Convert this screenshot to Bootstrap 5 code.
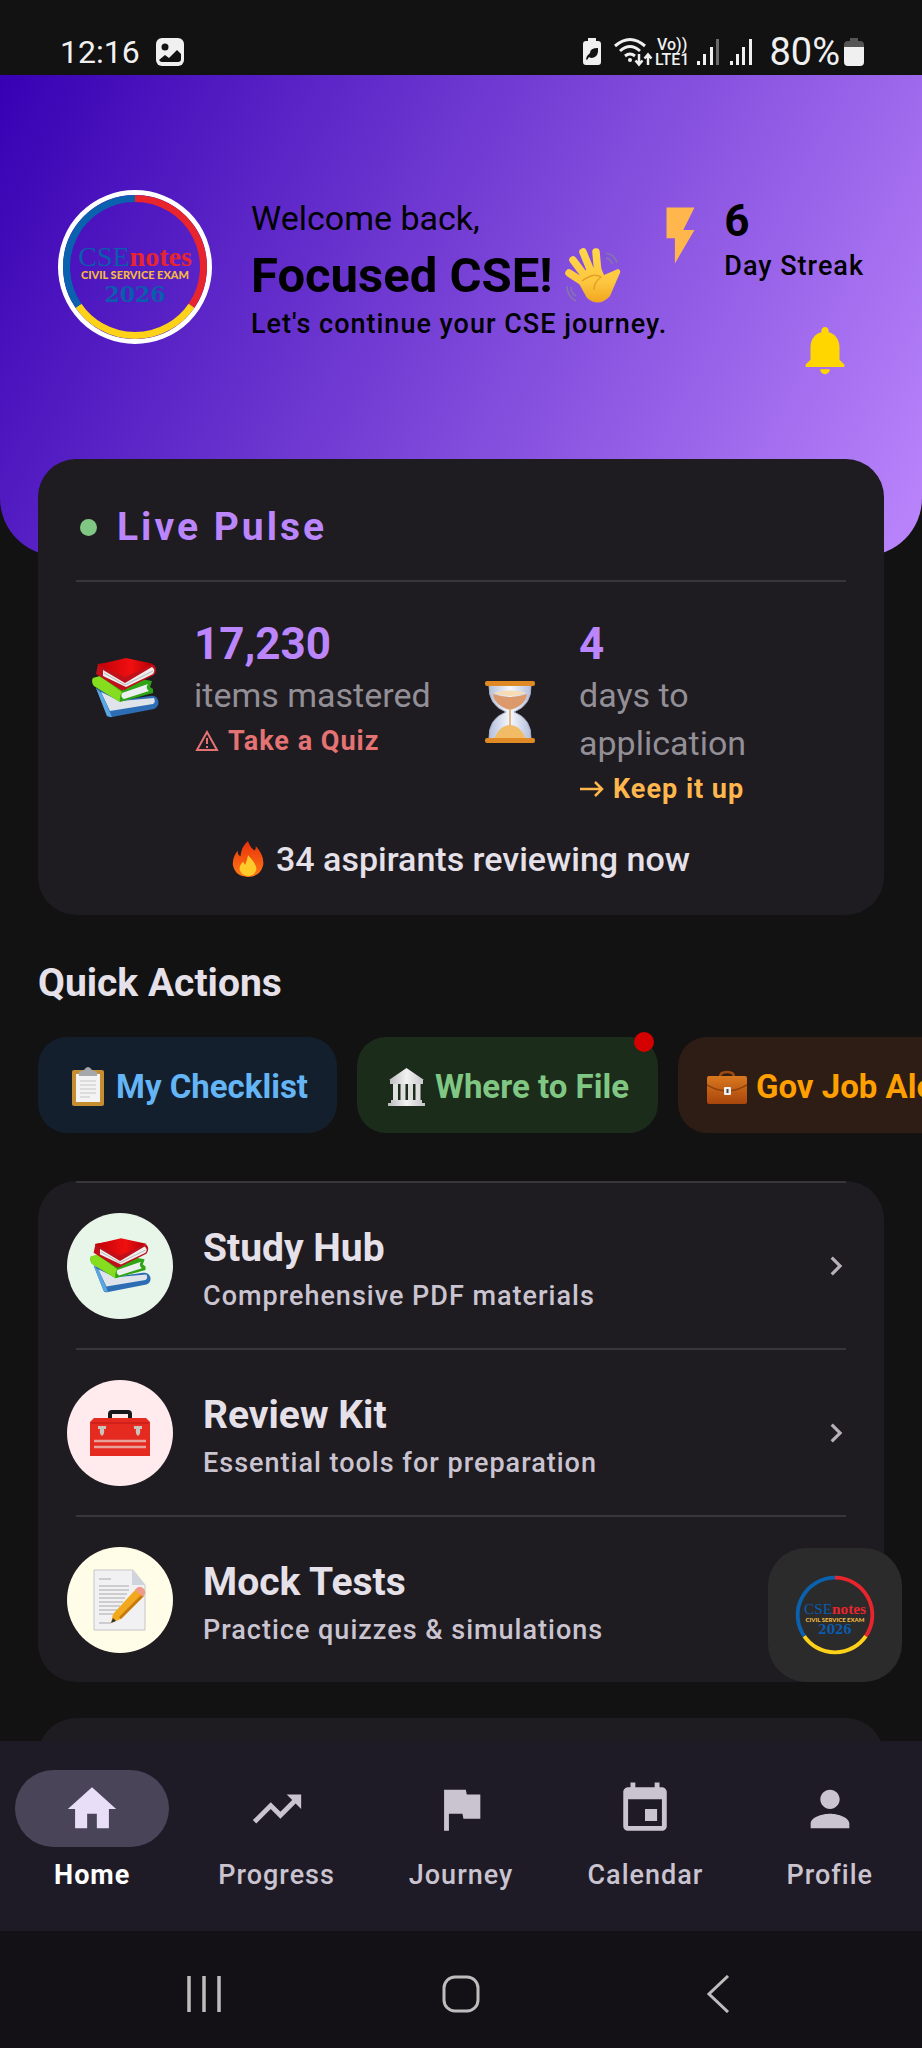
<!DOCTYPE html>
<html lang="en" data-bs-theme="dark">
<head>
<meta charset="utf-8">
<meta name="viewport" content="width=device-width, initial-scale=1">
<title>CSEnotes</title>
<link href="https://cdn.jsdelivr.net/npm/bootstrap@5.3.0/dist/css/bootstrap.min.css" rel="stylesheet">
<style>
  body { font-family: Roboto, "Liberation Sans", sans-serif; background: #121212; color: #e6e1e9; }
  h1, h2 { color: inherit; }
  a { text-decoration: none; color: inherit; }
  svg { display: block; flex: none; }
  .fw-mid { font-weight: 500; }
  .purple { color: #bb86fc; }
  .muted { color: #938f96; }
  .alert-red { color: #e57373; }
  .amber { color: #ffb74d; }

  /* type scale */
  .t-small { font-size: 27px; line-height: 36px; letter-spacing: 1px; }
  .t-chip { font-size: 33px; line-height: 48px; }
  .t-body { font-size: 34px; line-height: 48px; }
  .t-head { font-size: 39px; line-height: 52px; }
  .t-num { font-size: 44px; line-height: 54px; }
  .t-hero { font-size: 49px; line-height: 60px; }
  .tracked-wide { letter-spacing: 3px; }

  .status-bar { height: 75px; padding: 28px 58px 0 60px; color: #f0f0f0; }
  .clock { font-size: 32px; line-height: 40px; }
  .charge { font-size: 38px; line-height: 40px; }
  .volte { font-size: 16px; line-height: 15px; }

  .hero { background: linear-gradient(118deg, #3700b3, #bb86fc); border-radius: 0 0 58px 58px; color: #000; padding: 115px 58px 177px; }
  .hero-name { gap: 39px; min-width: 0; }
  .hero-text { padding-top: 4px; }
  .hero-text h1 { gap: 12px; }
  .streak { gap: 10px; }
  .bolt { margin-top: 12px; }
  .bell-btn { margin: 37px 10px 0 0; }

  .panel { background: #1e1b21; border: 0; border-radius: 38px; margin: 0 38px; }
  .pulse { margin-top: -97px; padding: 42px 38px 32px; }
  .pulse-dot { width: 17px; height: 17px; background: #81c784; margin-left: 4px; }
  .rule { height: 2px; background: #39363b; border: 0; opacity: 1; margin: 0; }
  .pulse .rule { margin: 27px 0 35px; }
  .stat { gap: 35px; padding-left: 16px; }
  .reviewing { margin-top: 28px; gap: 12px; }

  .quick-title { margin: 42px 38px 0; }
  .chips { gap: 20px; padding: 28px 38px 12px; overflow: hidden; }
  .chip { height: 96px; border-radius: 29px; padding: 4px 29px 0; border: 0; gap: 9px; white-space: nowrap; flex: none; }
  .chip:hover { filter: brightness(1.2); }
  .chip-blue { background: #141f2d; color: #64b5f6; }
  .chip-green { background: #1b2c1b; color: #81c784; }
  .chip-orange { background: #2d1d14; color: #ffa000; }
  .dot-badge { width: 20px; height: 20px; background: #d50000; top: -5px; right: 4px; }

  .hub { margin-top: 36px; overflow: hidden; }
  .hub .rule { margin: 0 38px; }
  .hub-row { height: 165px; padding: 0 29px; gap: 30px; }
  .hub-row small { color: #cac4d0; display: block; }
  .disc { width: 106px; height: 106px; flex: none; }
  .disc-green { background: #e8f5e9; }
  .disc-pink { background: #ffebee; }
  .disc-cream { background: #fffde7; }
  .next { margin-top: 36px; height: 120px; }

  .fab { right: 20px; bottom: 59px; width: 134px; height: 134px; border-radius: 38px; background: #2b2b2b; border: 0; }

  .tabs { background: #1f1b26; padding: 29px 0 38px; }
  .tabs a { flex: 1 1 0; color: #cac4d0; gap: 10px; }
  .tabs a.active { color: #fff; }
  .pill { width: 154px; height: 77px; }
  .active .pill { background: #4a4458; color: #e8def8; }
  .sys { background: #131115; height: 117px; padding: 8px 75px 0; }
  .sys button { flex: 1 1 0; background: none; border: 0; color: #bdbdbd; }
</style>
</head>
<body class="vh-100 d-flex flex-column overflow-hidden">

<svg width="0" height="0" class="position-absolute" aria-hidden="true">
  <defs>
    <linearGradient id="gRed" x1="0" x2="1"><stop offset="0" stop-color="#c00008"/><stop offset=".6" stop-color="#f01010"/><stop offset="1" stop-color="#b00008"/></linearGradient>
    <linearGradient id="gHand" gradientUnits="userSpaceOnUse" x1="0" y1="0" x2="0" y2="56"><stop offset="0" stop-color="#ffd84a"/><stop offset=".6" stop-color="#fdc740"/><stop offset="1" stop-color="#f0a41c"/></linearGradient>
    <linearGradient id="gCase" x1="0" y1="0" x2="0" y2="1"><stop offset="0" stop-color="#d9781f"/><stop offset="1" stop-color="#a8450c"/></linearGradient>
    <linearGradient id="gStone" x1="0" x2="1"><stop offset="0" stop-color="#b9b9bd"/><stop offset=".5" stop-color="#f2f2f2"/><stop offset="1" stop-color="#c3c3c8"/></linearGradient>
    <linearGradient id="gFire" x1="0" y1="0" x2="0" y2="1"><stop offset="0" stop-color="#e8300c"/><stop offset="1" stop-color="#ff7a14"/></linearGradient>
    <linearGradient id="gGlass" x1="0" x2="1"><stop offset="0" stop-color="#b4bfdc"/><stop offset=".5" stop-color="#f6f8fd"/><stop offset="1" stop-color="#b4bfdc"/></linearGradient>
    <symbol id="books" viewBox="0 0 67 60">
      <path d="M4 30 15 58Q17 60 20 59L62 51Q68 48 66 42Q64 37 58 38L30 42Z" fill="#2c6db4"/>
      <path d="M9 34 18 53 61 46Q64 44 62 40L28 43Z" fill="#dfe4ea"/>
      <path d="M4 30 15 58 20 59 10 36Z" fill="#5aa6e0"/>
      <path d="M1 20Q-1 24 2 28L28 44 61 35V31L58 29 60 23 20 16Z" fill="#2fa516"/>
      <path d="M30 35 56 26Q53 30 57 33L32 41Q28 39 30 35Z" fill="#eceff0"/>
      <path d="M1 20Q-1 24 2 28L28 44Q27 38 30 34L8 18Z" fill="#86dc1e"/>
      <path d="M6 6 4 16 29 32Q32 33 36 30L62 17Q66 12 62 7L34 2Z" fill="#c0101a"/>
      <path d="M11 12 33 25 60 9Q64 12 61 16L34 29 11 18Z" fill="#eee"/>
      <path d="M5 7 34 0 62 6 33 19Z" fill="url(#gRed)"/>
      <path d="M12 15 33 27 61 13" fill="none" stroke="#b5b5b5"/>
    </symbol>
    <symbol id="logo" viewBox="0 0 154 154">
      <g fill="none" stroke-width="7">
        <path d="M77 8.500A68.500 68.500 0 0 1 133.500 115.700" stroke="#e8252d"/>
        <path d="M133.500 115.700A68.500 68.500 0 0 1 20.500 115.700" stroke="#ffd21a"/>
        <path d="M20.500 115.700A68.500 68.500 0 0 1 77 8.500" stroke="#0a62ae"/>
      </g>
      <g text-anchor="middle">
        <text x="77" y="76" font-family="Liberation Serif, serif" font-size="28" fill="#0a5cae">CSE<tspan fill="#e8252d" font-weight="700">notes</tspan></text>
        <text x="77" y="89" font-family="Lato, sans-serif" font-size="11" font-weight="900" fill="#f4b942">CIVIL SERVICE EXAM</text>
        <text x="77" y="112" font-family="DejaVu Serif, serif" font-size="22" font-weight="700" fill="#0a5cae">2026</text>
      </g>
    </symbol>
    <symbol id="chev" viewBox="0 0 24 24"><path d="M10 6 8.590 7.410 13.170 12l-4.580 4.590L10 18l6-6z" fill="#b5b0ba"/></symbol>
  </defs>
</svg>

<header class="status-bar d-flex align-items-center justify-content-between flex-shrink-0">
  <div class="d-flex align-items-center gap-3">
    <span class="clock">12:16</span>
    <svg width="28" height="28" viewBox="0 0 28 28"><rect width="28" height="28" rx="6" fill="#f0f0f0"/><circle cx="9" cy="9" r="3.500" fill="#121212"/><path d="M3 22 9 17l4 3 8-8 4 4v5q0 3-3 3H6q-2 0-3-2Z" fill="#121212"/></svg>
  </div>
  <div class="d-flex align-items-center">
    <svg class="me-2" width="24" height="28" viewBox="0 0 24 28"><path d="M7 3V0h8v3h2q3 0 3 3v18q0 3-3 3H5q-3 0-3-3V6q0-3 3-3Z" fill="#f0f0f0"/><path d="M5 21q1-4 4-6 0-5 8-5 1 9-6 10-2 0-3-1l-2 3Z" fill="#121212"/></svg>
    <svg width="42" height="30" viewBox="0 0 42 30" fill="none" stroke="#f0f0f0" stroke-width="3"><path d="M2 9Q17-4 32 9M7 14q10-9 20 0M12 19q5-4 10 0"/><circle cx="17" cy="23" r="2" fill="#f0f0f0" stroke="none"/><path d="M26 17v10M22.500 23.500 26 27.500l3.500-4M35 28V18M31.500 21.500 35 17.500l3.500 4" stroke-width="2.500"/></svg>
    <span class="volte text-center fw-mid">Vo))<br>LTE1</span>
    <svg class="ms-2" width="24" height="28" viewBox="0 0 24 28" fill="#f0f0f0"><path d="M0 23h3v4H0zM6 16h3v11H6zM13 9h3v18h-3z"/><path d="M19 1h3v26h-3z" opacity=".4"/></svg>
    <svg class="ms-2" width="24" height="28" viewBox="0 0 24 28" fill="#f0f0f0"><path d="M1 23h3v4H1zM7 16h3v11H7zM13 9h3v18h-3zM20 1h3v26h-3z"/></svg>
    <span class="charge ms-3">80%</span>
    <svg class="ms-1" width="20" height="28" viewBox="0 0 20 28"><path d="M6 3V0h8v3h2q4 0 4 4v2H0V7q0-4 4-4Z" fill="#555"/><path d="M0 9h20v15q0 4-4 4H4q-4 0-4-4Z" fill="#f0f0f0"/></svg>
  </div>
</header>

<main class="position-relative flex-grow-1 overflow-hidden">
  <section class="hero d-flex justify-content-between align-items-start">
    <div class="hero-name d-flex">
      <svg width="154" height="154" viewBox="0 0 154 154"><circle cx="77" cy="77" r="74.500" fill="none" stroke="#fff" stroke-width="5"/><use href="#logo"/></svg>
      <div class="hero-text text-nowrap">
        <div class="t-body mb-1">Welcome back,</div>
        <h1 class="t-hero fw-bold m-0 d-flex align-items-center">Focused CSE!
          <svg width="60" height="56" viewBox="0 0 60 56"><g fill="none" stroke="url(#gHand)" stroke-linecap="round" stroke-width="7.500"><path d="M24 32 9 12M28 26 19 4M34 26 32 4M22 36 5 25"/></g><path d="M40 27 54 21Q58 22 55 27L46 48Q35 60 23 50L13 32 22 22 37 20Z" fill="url(#gHand)"/><path d="M18 33Q30 24 37 29 30 34 30 42" fill="none" stroke="#e5a024" stroke-width="1.500"/><path d="M42 5q9 2 11 10M42 10q5 1 6 6M3 38q0 10 9 15M7 39q0 6 5 9" fill="none" stroke="#8577a8" stroke-width="1.500"/></svg>
        </h1>
        <div class="t-small fw-mid">Let's continue your CSE journey.</div>
      </div>
    </div>
    <div class="d-flex flex-column align-items-end flex-shrink-0">
      <div class="streak d-flex">
        <svg class="bolt" width="67" height="67" viewBox="0 0 24 24"><path d="M7 2v11h3v9l7-12h-4l4-8z" fill="#ffb74d"/></svg>
        <div class="text-nowrap">
          <div class="t-num fw-bold mt-1">6</div>
          <div class="t-small fw-mid">Day Streak</div>
        </div>
      </div>
      <button class="bell-btn bg-transparent border-0 p-0" aria-label="Notifications"><svg width="58" height="58" viewBox="0 0 24 24"><path d="M12 22c1.100 0 2-.900 2-2h-4c0 1.100.890 2 2 2zm6-6v-5c0-3.070-1.640-5.640-4.500-6.320V4c0-.830-.670-1.500-1.500-1.500s-1.500.670-1.500 1.500v.680C7.630 5.360 6 7.920 6 11v5l-2 2v1h16v-1l-2-2z" fill="#ffd600"/></svg></button>
    </div>
  </section>

  <section class="panel pulse position-relative">
    <div class="d-flex align-items-center gap-3">
      <span class="pulse-dot rounded-circle"></span>
      <h2 class="t-head tracked-wide fw-bold purple m-0 ms-1">Live Pulse</h2>
    </div>
    <hr class="rule">
    <div class="row g-0">
      <div class="col-6 d-flex align-items-center align-self-start stat">
        <svg width="67" height="60"><use href="#books"/></svg>
        <div class="text-nowrap">
          <div class="t-num fw-bold purple">17,230</div>
          <div class="t-body muted">items mastered</div>
          <a href="#quiz" class="t-small alert-red fw-bold d-flex align-items-center gap-2 mt-1"><svg width="26" height="22" viewBox="0 0 24 22" fill="none" stroke="currentColor" stroke-width="2"><path d="M12 2 22 20H2ZM12 8v6M12 16v2"/></svg>Take a Quiz</a>
        </div>
      </div>
      <div class="col-6 d-flex align-items-center stat">
        <svg width="67" height="62" viewBox="-8 0 67 62"><path d="M4 4H46Q47 24 29 31 47 38 46 58H4Q3 38 21 31 3 24 4 4Z" fill="url(#gGlass)" stroke="#a4acc0" stroke-width="1"/><path d="M8 13q17 6 34 0Q41 24 25 29 9 24 8 13Z" fill="#dc9a6c"/><path d="M8 12q17-5 34 0-17 6-34 0Z" fill="#f5dcb4"/><path d="M24 28h2v20h-2z" fill="#e3b98a"/><path d="M9 58q6-14 16-14t16 14Z" fill="#f2bb66"/><rect width="50" height="5" rx="2" fill="#e08a26"/><rect y="57" width="50" height="5" rx="2" fill="#e08a26"/></svg>
        <div>
          <div class="t-num fw-bold purple">4</div>
          <div class="t-body muted">days to<br>application</div>
          <a href="#streak" class="t-small amber fw-bold d-flex align-items-center gap-2 mt-1"><svg width="26" height="18" viewBox="0 0 26 18" fill="none" stroke="currentColor" stroke-width="2.500"><path d="M1 9h22M16 2l7 7-7 7"/></svg>Keep it up</a>
        </div>
      </div>
    </div>
    <p class="reviewing t-body fw-mid mb-0 d-flex justify-content-center align-items-center">
      <svg width="32" height="38" viewBox="0 0 34 38"><path d="M17 0q2 7 7 10 2-2 1-5 10 11 8 21-3 12-16 12T1 26Q0 18 6 10q0 5 3 6Q10 6 17 0Z" fill="url(#gFire)"/><path d="M17 15q9 9 9 15-2 7-9 7t-9-7q0-5 4-8 1 3 2 3 2-4 3-10Z" fill="#ffcb2b"/></svg>
      34 aspirants reviewing now
    </p>
  </section>

  <h2 class="quick-title t-head fw-bold">Quick Actions</h2>
  <div class="chips d-flex">
    <button class="chip chip-blue t-chip fw-bold d-flex align-items-center">
      <svg width="40" height="40" viewBox="-1 0 40 40"><rect x="4" y="3" width="32" height="36" rx="2" fill="#c78d31"/><path d="M8 7h24v28H8z" fill="#f3f3f3"/><path d="M16 3q4-6 8 0l5 2v4H11V5Z" fill="#a4a8ab"/><path d="M12 14h16M12 18h16M12 22h16M12 26h16M12 30h10" stroke="#c4c4c4"/></svg>
      My Checklist
    </button>
    <button class="chip chip-green t-chip fw-bold d-flex align-items-center position-relative">
      <svg width="40" height="38" viewBox="-2 0 40 38"><path d="M18.500 0 36 12H1ZM2 12h33v4H2ZM3 32h31v3H3ZM0 35h37v3H0Z" fill="url(#gStone)"/><path d="M5 16h5v16H5zM12.500 16h5v16h-5zM20 16h5v16h-5zM27.500 16h5v16h-5z" fill="#dededf"/></svg>
      Where to File
      <span class="dot-badge position-absolute rounded-circle"></span>
    </button>
    <button class="chip chip-orange t-chip fw-bold d-flex align-items-center">
      <svg width="40" height="34" viewBox="0 0 40 34"><path d="M13 7q0-5 7-5t7 5" fill="none" stroke="#a04a12" stroke-width="2.500"/><rect y="6" width="40" height="28" rx="2" fill="url(#gCase)"/><path d="M0 15q10 6 20 6t20-6" fill="none" stroke="#8f400c" stroke-width="1.500"/><rect x="17" y="17" width="7" height="8" rx="1" fill="#eee"/><path d="M19.500 19h2v4h-2z" fill="#444"/></svg>
      Gov Job Alerts
    </button>
  </div>

  <section class="panel hub">
    <hr class="rule">
    <a href="#hub" class="hub-row d-flex align-items-center">
      <span class="disc disc-green rounded-circle d-flex align-items-center justify-content-center"><svg width="61" height="55"><use href="#books"/></svg></span>
      <span class="flex-grow-1 pt-1"><span class="t-head fw-bold d-block">Study Hub</span><small class="t-small fw-mid mt-1">Comprehensive PDF materials</small></span>
      <svg width="38" height="38"><use href="#chev"/></svg>
    </a>
    <hr class="rule">
    <a href="#kit" class="hub-row d-flex align-items-center">
      <span class="disc disc-pink rounded-circle d-flex align-items-center justify-content-center"><svg width="60" height="46" viewBox="0 0 60 46"><path d="M20 9V4q0-2 2-2h16q2 0 2 2v5" fill="none" stroke="#17191c" stroke-width="4"/><path d="M4 8H56L60 12V46H0V12Z" fill="#e52a20"/><path d="M1 13h58" stroke="#b91712"/><path d="M4 31h52M4 37h52" stroke="#e6a29b" stroke-width="2.500"/><path d="M8 16h8v3h-2q1 5-2 7-3-2-2-7H8ZM44 16h8v3h-2q1 5-2 7-3-2-2-7h-2Z" fill="#c9c2bd"/></svg></span>
      <span class="flex-grow-1 pt-1"><span class="t-head fw-bold d-block">Review Kit</span><small class="t-small fw-mid mt-1">Essential tools for preparation</small></span>
      <svg width="38" height="38"><use href="#chev"/></svg>
    </a>
    <hr class="rule">
    <a href="#mock" class="hub-row d-flex align-items-center">
      <span class="disc disc-cream rounded-circle d-flex align-items-center justify-content-center"><svg width="54" height="62" viewBox="0 0 54 62"><path d="M1 1H40L52 16V61H1Z" fill="#f1f1f3" stroke="#c6c6ca"/><path d="M39 1v15h13Z" fill="#cfd4dc"/><path d="M6 10h12M6 17h30M6 21h30M6 25h28M6 29h26M6 33h24M6 37h21M6 41h18M6 45h14M6 54h12" stroke="#a9a9ad"/><path d="M20 45 43 20l8 7L28 50 18 54Z" fill="#f2a91d"/><path d="m26 48 23-23 2 2-23 23Z" fill="#c57a10"/><path d="M42 21q4-6 9-1 3 4-1 8Z" fill="#ee9a8a"/><path d="m18 54 2-5 3 3Z" fill="#333"/></svg></span>
      <span class="flex-grow-1 pt-1"><span class="t-head fw-bold d-block">Mock Tests</span><small class="t-small fw-mid mt-1">Practice quizzes &amp; simulations</small></span>
    </a>
  </section>
  <section class="panel next"></section>

  <button class="fab position-absolute d-flex align-items-center justify-content-center p-0" aria-label="CSEnotes assistant"><svg width="84" height="84"><use href="#logo"/></svg></button>
</main>

<nav class="tabs d-flex flex-shrink-0 text-center t-small fw-mid">
  <a href="#home" class="active fw-bold d-flex flex-column align-items-center"><span class="pill rounded-pill d-flex align-items-center justify-content-center"><svg width="58" height="58" viewBox="0 0 24 24" fill="currentColor"><path d="M10 20v-6h4v6h5v-8h3L12 3 2 12h3v8z"/></svg></span>Home</a>
  <a href="#progress" class="d-flex flex-column align-items-center"><span class="pill d-flex align-items-center justify-content-center"><svg width="58" height="58" viewBox="0 0 24 24" fill="currentColor"><path d="m16 6 2.290 2.290-4.880 4.880-4-4L2 16.590 3.410 18l6-6 4 4 6.300-6.290L22 12V6z"/></svg></span>Progress</a>
  <a href="#journey" class="d-flex flex-column align-items-center"><span class="pill d-flex align-items-center justify-content-center"><svg width="58" height="58" viewBox="0 0 24 24" fill="currentColor"><path d="M14.400 6 14 4H5v17h2v-7h5.600l.400 2h7V6z"/></svg></span>Journey</a>
  <a href="#calendar" class="d-flex flex-column align-items-center"><span class="pill d-flex align-items-center justify-content-center"><svg width="58" height="58" viewBox="0 0 24 24" fill="currentColor"><path d="M17 12h-5v5h5v-5zM16 1v2H8V1H6v2H5c-1.110 0-1.990.900-1.990 2L3 19c0 1.100.890 2 2 2h14c1.100 0 2-.900 2-2V5c0-1.100-.900-2-2-2h-1V1h-2zm3 18H5V8h14v11z"/></svg></span>Calendar</a>
  <a href="#profile" class="d-flex flex-column align-items-center"><span class="pill d-flex align-items-center justify-content-center"><svg width="58" height="58" viewBox="0 0 24 24" fill="currentColor"><path d="M12 12c2.210 0 4-1.790 4-4s-1.790-4-4-4-4 1.790-4 4 1.790 4 4 4zm0 2c-2.670 0-8 1.340-8 4v2h16v-2c0-2.660-5.330-4-8-4z"/></svg></span>Profile</a>
</nav>
<div class="sys d-flex flex-shrink-0">
  <button class="d-flex align-items-center justify-content-center" aria-label="Recent apps"><svg width="38" height="38" viewBox="0 0 38 38" stroke="currentColor" stroke-width="3.500"><path d="M4 1v36M19 1v36M34 1v36"/></svg></button>
  <button class="d-flex align-items-center justify-content-center" aria-label="Home screen"><svg width="38" height="38" viewBox="0 0 38 38" fill="none" stroke="currentColor" stroke-width="3"><rect x="2" y="2" width="34" height="34" rx="11"/></svg></button>
  <button class="d-flex align-items-center justify-content-center" aria-label="Back"><svg width="24" height="38" viewBox="0 0 24 38" fill="none" stroke="currentColor" stroke-width="3"><path d="M22 1 3 19l19 18"/></svg></button>
</div>
<script src="https://cdn.jsdelivr.net/npm/bootstrap@5.3.0/dist/js/bootstrap.bundle.min.js"></script>
</body>
</html>
